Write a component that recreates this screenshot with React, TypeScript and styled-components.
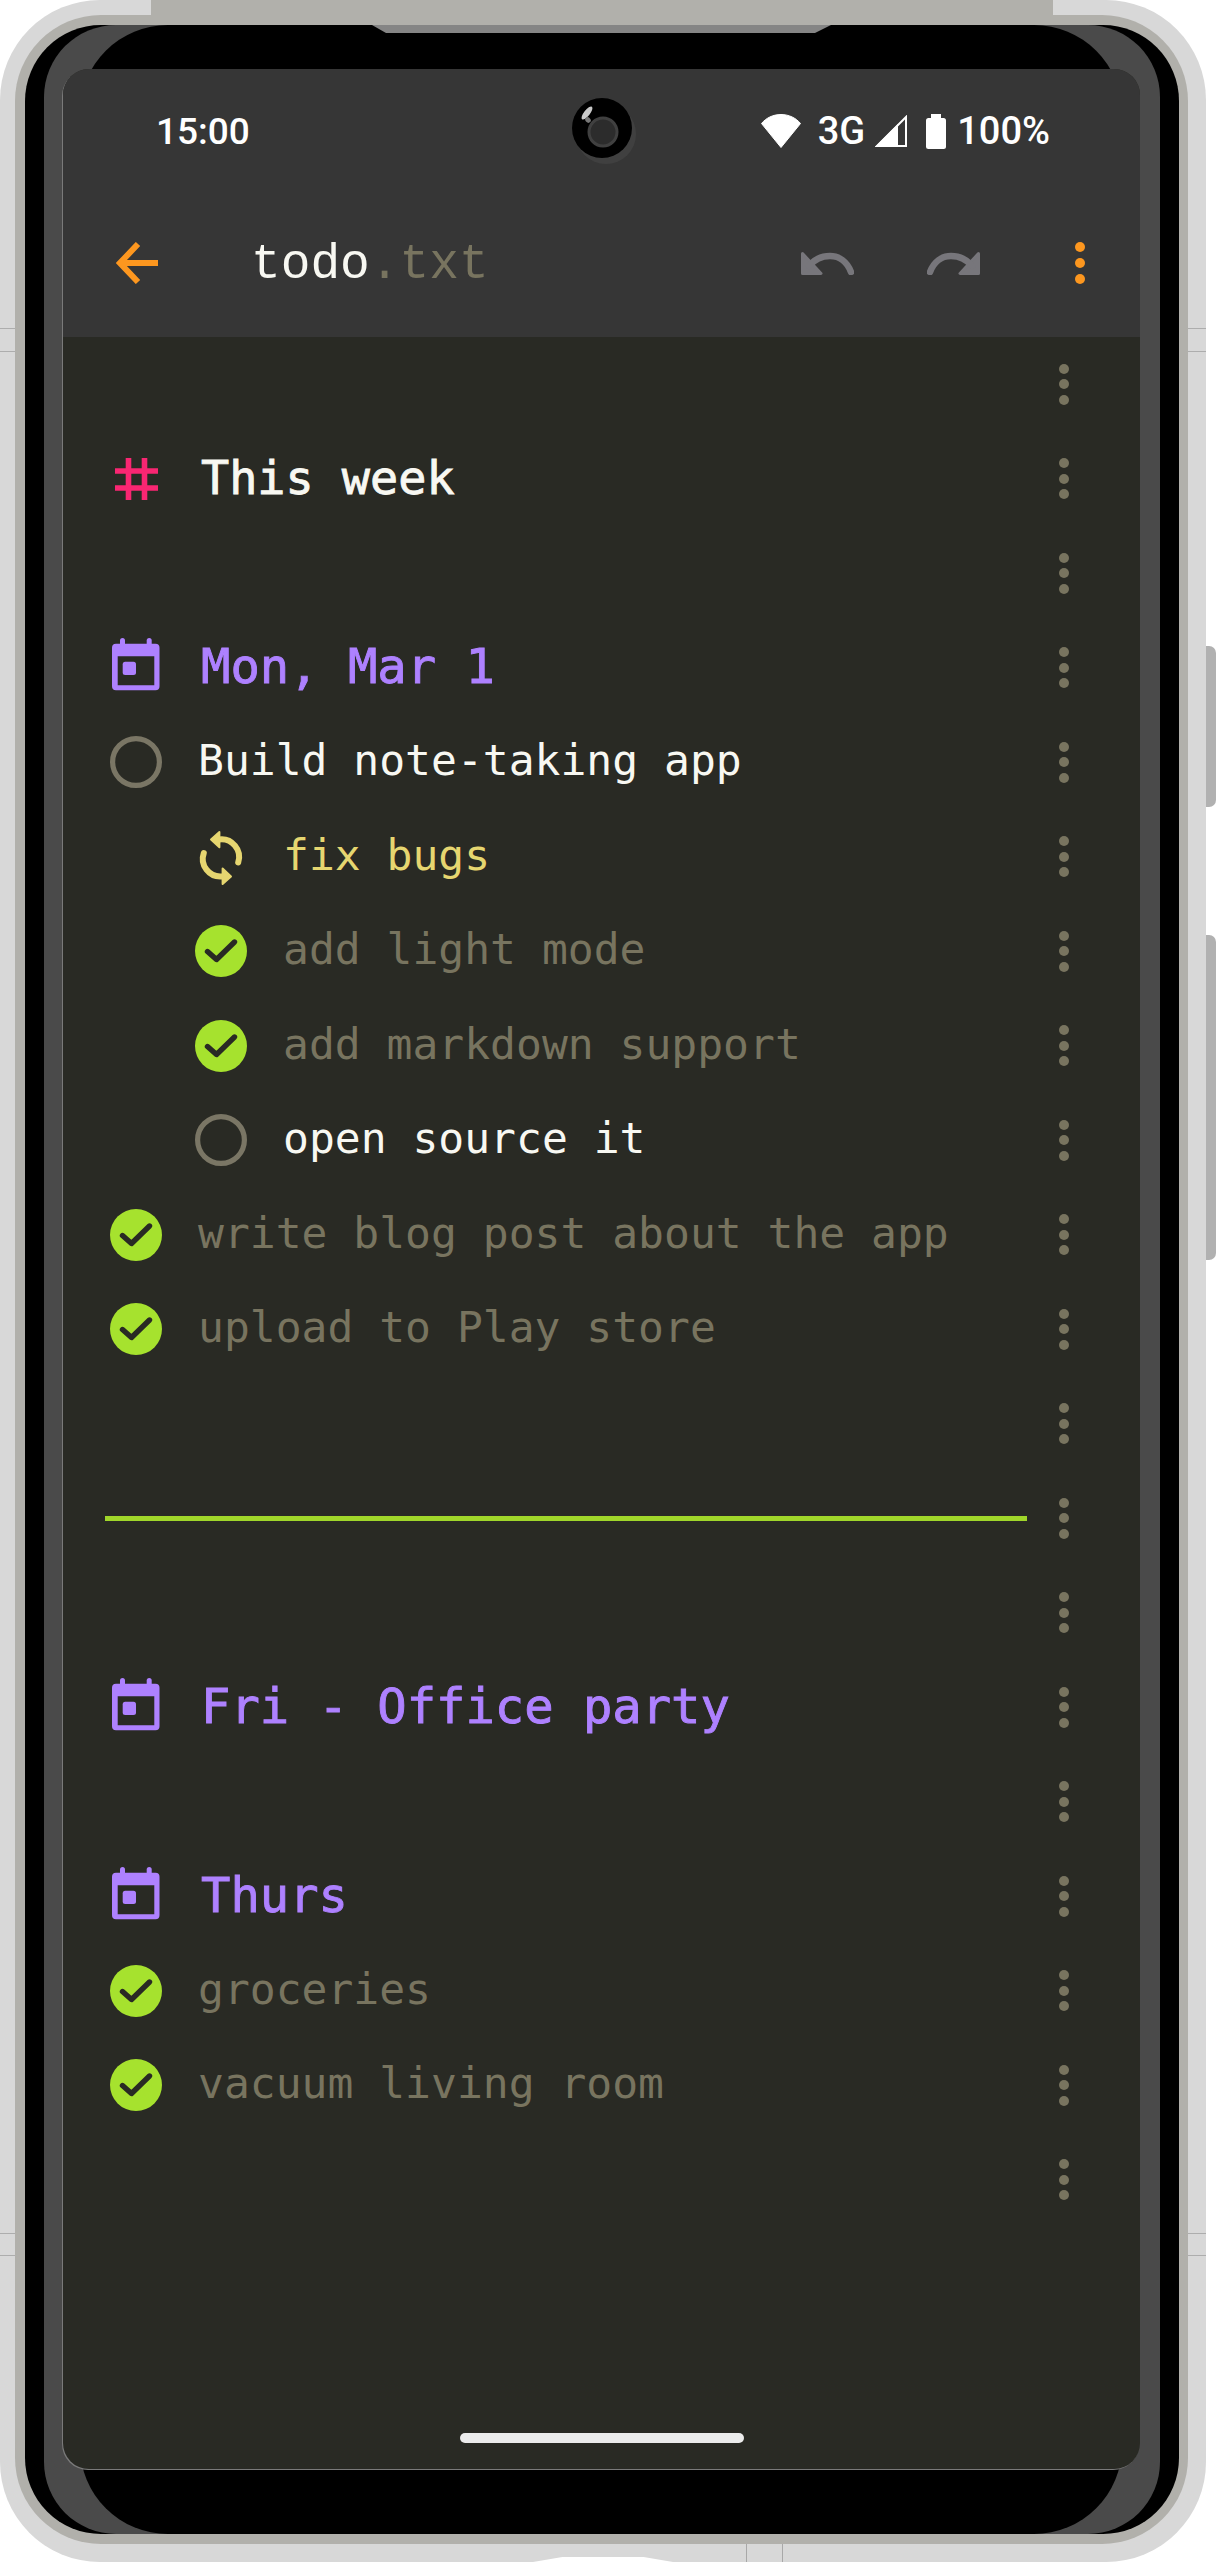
import React from "react";
import styled, { createGlobalStyle } from "styled-components";

const MONO = `"DejaVu Sans Mono", "Liberation Mono", monospace`;
const BG = "#292a24";
const MUTED = "#78745f";
const WHITE = "#f8f8f2";
const PURPLE = "#ae81ff";
const GREEN = "#a6e22e";
const YELLOW = "#e6d670";
const ORANGE = "#fd971f";
const PINK = "#f92672";

const GlobalStyle = createGlobalStyle`
    html, body {
        margin: 0;
        padding: 0;
        background: #fff;
    }
`;

const Page = styled.div`
    display: flex;
    width: 1216px;
    height: 2562px;
    overflow: hidden;
`;

const Frame = styled.div`
    position: relative;
    display: flex;
    box-sizing: border-box;
    width: 1206px;
    height: 2562px;
    padding: 15px 18px 18px 15px;
    background: #d8d8d8;
    border-radius: 100px;

    &::before {
        content: "";
        position: absolute;
        top: 0;
        left: 151px;
        right: 153px;
        height: 25px;
        background: #b1b0ab;
    }
`;

const BottomDip = styled.div`
    position: absolute;
    left: 533px;
    bottom: 0;
    width: 140px;
    height: 5px;
    background: #fff;
    clip-path: polygon(0 100%, 21% 0, 79% 0, 100% 100%);
`;

const SideSeam = styled.div<{ $side: "left" | "right"; $top: number }>`
    position: absolute;
    top: ${(p) => p.$top}px;
    ${(p) => (p.$side === "left" ? "left: 0;" : "right: 0;")}
    width: ${(p) => (p.$side === "left" ? 15 : 18)}px;
    height: 1px;
    background: #adadad;
`;

const BottomSeam = styled.div<{ $left: number }>`
    position: absolute;
    left: ${(p) => p.$left}px;
    bottom: 0;
    width: 1px;
    height: 18px;
    background: #a8a8a8;
`;

const Bezel = styled.div`
    display: flex;
    flex: 1;
    padding: 10px 9px 10px 10px;
    background: #b1b0ab;
    border-radius: 86px;
`;

const Backplate = styled.div`
    display: flex;
    flex: 1;
    padding: 0 19px;
    background: #000;
    border-radius: 76px;
`;

const Rim = styled.div`
    position: relative;
    display: flex;
    flex: 1;
    padding: 44px 20px 65px 19px;
    background: #4a4a4a;
    border-radius: 72px;

    &::before {
        content: "";
        position: absolute;
        top: 0;
        bottom: 0;
        left: 36px;
        right: 38px;
        background: #000;
        border-radius: 88px;
    }
`;

const SpeakerNotch = styled.div`
    position: absolute;
    top: 0;
    left: 328px;
    width: 459px;
    height: 8px;
    background: #858585;
    clip-path: polygon(0 0, 100% 0, calc(100% - 16px) 100%, 14px 100%);
`;

const Screen = styled.div`
    position: relative;
    display: flex;
    flex-direction: column;
    flex: 1;
    overflow: hidden;
    background: ${BG};
    border-radius: 26px;
    box-shadow: -1px 1px 0 #7a7a7a;
`;

const Header = styled.header`
    display: flex;
    flex-direction: column;
    height: 268px;
    background: #363636;
`;

const StatusBar = styled.div`
    display: flex;
    align-items: center;
    justify-content: space-between;
    box-sizing: border-box;
    height: 122px;
    padding: 2px 90px 0 93px;
    color: #fff;
    font-family: Roboto, "Liberation Sans", sans-serif;
    font-size: 38px;
    font-weight: 500;
`;

const Clock = styled.span`
    font-size: 37px;
`;

const StatusIcons = styled.div`
    display: flex;
    align-items: center;
`;

const StatusLabel = styled.span<{ $gap: number }>`
    margin-left: ${(p) => p.$gap}px;
`;

const StatusSvg = styled.svg<{ $gap: number }>`
    display: block;
    margin-left: ${(p) => p.$gap}px;
`;

const Camera = styled.div`
    position: absolute;
    left: 508px;
    top: 29px;
    width: 70px;
    height: 70px;
`;

const Toolbar = styled.div`
    display: flex;
    align-items: center;
    flex: 1;
    padding: 0 55px 2px 53px;
`;

const BackIcon = styled.svg`
    display: block;
    flex: none;
`;

const FileName = styled.div`
    flex: 1;
    margin-left: 93px;
    padding-top: 6px;
    color: ${WHITE};
    font-family: "Liberation Mono", "DejaVu Sans Mono", monospace;
    font-size: 49.5px;
    line-height: 1;

    span {
        color: ${MUTED};
    }
`;

const HistoryIcon = styled.svg<{ $redo?: boolean }>`
    display: block;
    flex: none;
    margin-right: ${(p) => (p.$redo ? 95 : 73)}px;
    transform: ${(p) => (p.$redo ? "scaleX(-1)" : "none")};
`;

const DotColumn = styled.div<{ $color: string }>`
    display: flex;
    flex-direction: column;
    gap: 5.7px;
    flex: none;

    i {
        display: block;
        width: 10px;
        height: 10px;
        border-radius: 50%;
        background: ${(p) => p.$color};
    }
`;

const Body = styled.main`
    display: flex;
    flex-direction: column;
    flex: 1;
`;

const Row = styled.div`
    display: flex;
    align-items: center;
    height: 94.5px;
    padding-right: 71px;
`;

const RowContent = styled.div<{ $indent: number }>`
    display: flex;
    align-items: center;
    flex: 1;
    min-width: 0;
    padding-left: ${(p) => 47 + p.$indent * 85}px;
`;

const IconSlot = styled.div`
    display: flex;
    align-items: center;
    justify-content: center;
    flex: none;
    width: 52px;
    height: 52px;

    svg {
        display: block;
        overflow: visible;
    }
`;

const ItemText = styled.span<{ $color: string }>`
    margin: 0 0 3px 36px;
    color: ${(p) => p.$color};
    font-family: ${MONO};
    font-size: 43px;
    line-height: 1;
    white-space: pre;
`;

const HeadingText = styled.span<{ $color: string; $size: number }>`
    margin: 0 0 0 39px;
    color: ${(p) => p.$color};
    font-family: ${MONO};
    font-size: ${(p) => p.$size}px;
    line-height: 1;
    white-space: pre;
    -webkit-text-stroke: 0.9px ${(p) => p.$color};
`;

const Divider = styled.div`
    flex: 1;
    height: 5px;
    margin: 0 32px 0 42px;
    background: #a0d62a;
`;

const HomeBar = styled.div`
    flex: none;
    width: 284px;
    height: 10px;
    margin: auto auto 26px;
    background: #ececec;
    border-radius: 5px;
`;

const SideKeys = styled.div`
    display: flex;
    flex-direction: column;
    flex: 1;
    gap: 128px;
    padding-top: 646px;
`;

const SideKey = styled.div<{ $height: number }>`
    height: ${(p) => p.$height}px;
    background: #b1b1b1;
    border-radius: 0 7px 7px 0;
`;

const Dots = ({ color = MUTED }: { color?: string }) => (
    <DotColumn $color={color}>
        <i />
        <i />
        <i />
    </DotColumn>
);

const HashIcon = () => (
    <svg width="43" height="42" viewBox="0 0 43 42" fill="none" stroke={PINK} strokeWidth="5.6">
        <path d="M13.5 0v42M29.5 0v42M0 13h43M0 30h43" />
    </svg>
);

const CalendarIcon = () => (
    <svg width="48" height="53" viewBox="0 0 48 53" fill={PURPLE} style={{ marginTop: -6 }}>
        <path
            fillRule="evenodd"
            d="M4 5.7h39.5a4 4 0 0 1 4 4v38.6a4 4 0 0 1-4 4H4a4 4 0 0 1-4-4V9.7a4 4 0 0 1 4-4zM5.7 18.3v29h36.6v-29z"
        />
        <rect x="8" y="0" width="5" height="8" rx="2.5" />
        <rect x="34.7" y="0" width="5" height="8" rx="2.5" />
        <rect x="10.7" y="23.7" width="13.3" height="13.3" rx="2.5" />
    </svg>
);

const OpenIcon = () => (
    <svg width="52" height="52" viewBox="0 0 52 52" fill="none">
        <circle cx="26" cy="26" r="23.4" stroke="#7a7665" strokeWidth="5.2" />
    </svg>
);

const DoneIcon = () => (
    <svg width="52" height="52" viewBox="0 0 52 52" fill="none">
        <circle cx="26" cy="26" r="26" fill={GREEN} />
        <path
            d="M12.5 26.5l9 8L39.5 17"
            stroke={BG}
            strokeWidth="5.4"
            strokeLinecap="round"
            strokeLinejoin="round"
        />
    </svg>
);

const SyncIcon = () => (
    <svg width="52" height="52" viewBox="0 0 52 52" fill="none" stroke={YELLOW}>
        <path d="M24 8.5A17.7 17.7 0 0 1 43.2 31.5" strokeWidth="6" strokeLinecap="round" />
        <path d="M24.4 1L16 8.4l8.4 7.8z" fill={YELLOW} strokeWidth="2" strokeLinejoin="round" />
        <path d="M27 45.5A17.7 17.7 0 0 1 8.8 22" strokeWidth="6" strokeLinecap="round" />
        <path d="M27.6 37.5l8.4 8-8.4 7.5z" fill={YELLOW} strokeWidth="2" strokeLinejoin="round" />
    </svg>
);

type Item =
    | { kind: "blank" }
    | { kind: "rule" }
    | { kind: "title"; text: string }
    | { kind: "date"; text: string }
    | { kind: "task"; text: string; status: "open" | "doing" | "done"; indent?: number };

const ITEMS: Item[] = [
    { kind: "blank" },
    { kind: "title", text: "This week" },
    { kind: "blank" },
    { kind: "date", text: "Mon, Mar 1" },
    { kind: "task", text: "Build note-taking app", status: "open" },
    { kind: "task", text: "fix bugs", status: "doing", indent: 1 },
    { kind: "task", text: "add light mode", status: "done", indent: 1 },
    { kind: "task", text: "add markdown support", status: "done", indent: 1 },
    { kind: "task", text: "open source it", status: "open", indent: 1 },
    { kind: "task", text: "write blog post about the app", status: "done" },
    { kind: "task", text: "upload to Play store", status: "done" },
    { kind: "blank" },
    { kind: "rule" },
    { kind: "blank" },
    { kind: "date", text: "Fri - Office party" },
    { kind: "blank" },
    { kind: "date", text: "Thurs" },
    { kind: "task", text: "groceries", status: "done" },
    { kind: "task", text: "vacuum living room", status: "done" },
    { kind: "blank" },
];

const taskColor = { open: WHITE, doing: YELLOW, done: MUTED };
const TaskIcon = { open: OpenIcon, doing: SyncIcon, done: DoneIcon };

const renderItem = (item: Item) => {
    switch (item.kind) {
        case "blank":
            return <RowContent $indent={0} />;
        case "rule":
            return <Divider />;
        case "title":
            return (
                <RowContent $indent={0}>
                    <IconSlot>
                        <HashIcon />
                    </IconSlot>
                    <HeadingText $color={WHITE} $size={46.8}>
                        {item.text}
                    </HeadingText>
                </RowContent>
            );
        case "date":
            return (
                <RowContent $indent={0}>
                    <IconSlot>
                        <CalendarIcon />
                    </IconSlot>
                    <HeadingText $color={PURPLE} $size={48.8}>
                        {item.text}
                    </HeadingText>
                </RowContent>
            );
        case "task": {
            const Icon = TaskIcon[item.status];
            return (
                <RowContent $indent={item.indent ?? 0}>
                    <IconSlot>
                        <Icon />
                    </IconSlot>
                    <ItemText $color={taskColor[item.status]}>{item.text}</ItemText>
                </RowContent>
            );
        }
    }
};

const HistoryGlyph = ({ redo }: { redo?: boolean }) => (
    <HistoryIcon $redo={redo} width="53" height="23" viewBox="0 0 53 23" fill="none">
        <path d="M1.5 1.5L20 21.5H1.5z" fill="#77767b" stroke="#77767b" strokeWidth="3" strokeLinejoin="round" />
        <path d="M8 14C13 8 20 4 29 4C38 4 46 9.500 50 20" stroke="#77767b" strokeWidth="6.5" strokeLinecap="round" />
    </HistoryIcon>
);

const App = () => {
    return (
        <Page>
            <GlobalStyle />
            <Frame>
                <BottomDip />
                {[328, 351, 2233, 2255].map((top) => (
                    <React.Fragment key={top}>
                        <SideSeam $side="left" $top={top} />
                        <SideSeam $side="right" $top={top} />
                    </React.Fragment>
                ))}
                <BottomSeam $left={746} />
                <BottomSeam $left={782} />
                <Bezel>
                    <Backplate>
                        <Rim>
                            <SpeakerNotch />
                            <Screen>
                                <Header>
                                    <StatusBar>
                                        <Clock>15:00</Clock>
                                        <StatusIcons>
                                            <StatusSvg $gap={0} width="40" height="34" viewBox="0 0 40 34" fill="#fff">
                                                <path d="M0.500 9.500C5 4 12 0.500 20 0.500C28 0.500 35 4 39.500 9.500L20 33.500z" stroke="#fff" strokeLinejoin="round" />
                                            </StatusSvg>
                                            <StatusLabel $gap={17}>3G</StatusLabel>
                                            <StatusSvg $gap={10} width="32" height="32" viewBox="0 0 32 32" fill="none">
                                                <path d="M0 32L23 9V32z" fill="#fff" />
                                                <path d="M2 31L31 2V31z" stroke="#fff" strokeWidth="2" />
                                            </StatusSvg>
                                            <StatusSvg $gap={19} width="20" height="35" viewBox="0 0 20 35" fill="#fff">
                                                <path d="M5 0h10v5H5z" />
                                                <rect x="0" y="4" width="20" height="31" rx="2.500" />
                                            </StatusSvg>
                                            <StatusLabel $gap={11}>100%</StatusLabel>
                                        </StatusIcons>
                                    </StatusBar>
                                    <Camera>
                                        <svg width="70" height="70" viewBox="0 0 70 70">
                                            <circle cx="35" cy="36" r="30" fill="#404040" />
                                            <circle cx="31" cy="30" r="30" fill="#000" />
                                            <circle cx="32" cy="34" r="14" fill="#2c2c2c" stroke="#404040" strokeWidth="3" />
                                            <ellipse cx="16" cy="15" rx="3" ry="8" fill="#c9c9c9" transform="rotate(38 16 15)" />
                                            <ellipse cx="17" cy="22" rx="2.500" ry="3" fill="#777" transform="rotate(-45 17 22)" />
                                        </svg>
                                    </Camera>
                                    <Toolbar>
                                        <BackIcon width="42" height="42" viewBox="0 0 42 42" fill="none">
                                            <path d="M42 21H4M22 2L4 21l18 19" stroke={ORANGE} strokeWidth="6" />
                                        </BackIcon>
                                        <FileName>
                                            todo<span>.txt</span>
                                        </FileName>
                                        <HistoryGlyph />
                                        <HistoryGlyph redo />
                                        <Dots color={ORANGE} />
                                    </Toolbar>
                                </Header>
                                <Body>
                                    {ITEMS.map((item, i) => (
                                        <Row key={i}>
                                            {renderItem(item)}
                                            <Dots />
                                        </Row>
                                    ))}
                                    <HomeBar />
                                </Body>
                            </Screen>
                        </Rim>
                    </Backplate>
                </Bezel>
            </Frame>
            <SideKeys>
                <SideKey $height={161} />
                <SideKey $height={325} />
            </SideKeys>
        </Page>
    );
};

export default App;
